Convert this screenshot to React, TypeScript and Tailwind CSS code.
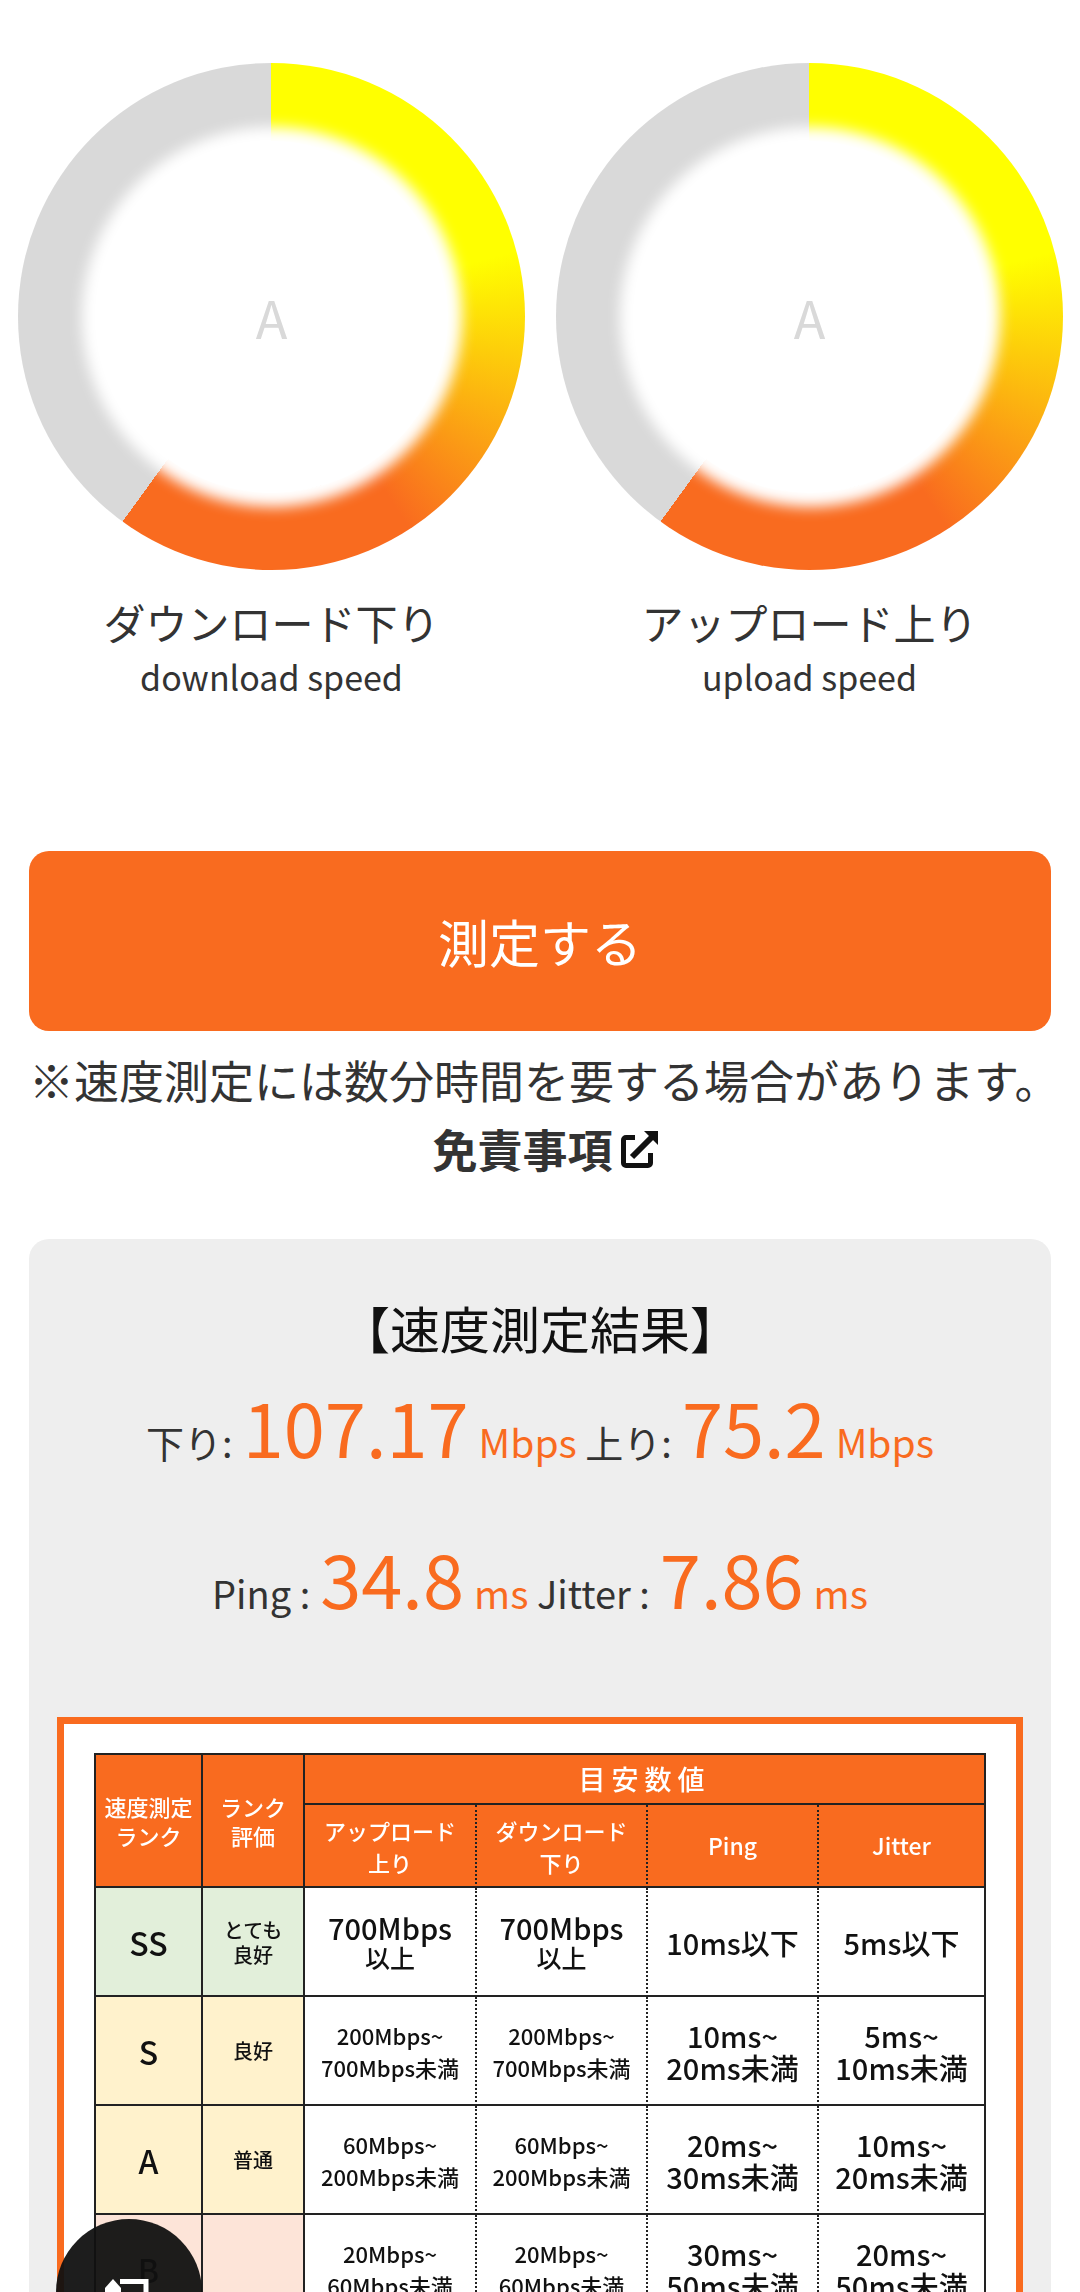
import React from 'react';

const font = "font-['Noto_Sans_CJK_JP','Noto_Sans',sans-serif]";

const Gauge = ({ title, sub }: { title: string; sub: string }) => (
  <div className="flex flex-col items-center">
    <div className="w-[507px] h-[507px] rounded-full flex items-center justify-center bg-[conic-gradient(#ffff00_0deg_75deg,#f96b1f_147deg_216deg,#d9d9d9_216deg_360deg)]">
      <div className="w-[352px] h-[352px] rounded-full bg-white shadow-[0_0_14px_14px_#ffffff] flex items-center justify-center text-[52px] text-[#d9d9d9]">
        A
      </div>
    </div>
    <div className="mt-[22px] text-[42px] leading-[60px] text-[#333]">{title}</div>
    <div className="text-[34px] leading-[50px] text-[#333]">{sub}</div>
  </div>
);

const Stat = ({ value, unit }: { value: string; unit: string }) => (
  <>
    <span className="text-[74px] text-[#f96b1f] mx-[10px]">{value}</span>
    <span className="text-[39px] text-[#f96b1f]">{unit}</span>
  </>
);

const rows = [
  {
    rank: 'SS',
    label: ['とても', '良好'],
    bg: 'bg-[#e2efda]',
    speed: ['700Mbps', '以上'],
    big: true,
    ping: ['10ms以下'],
    jitter: ['5ms以下'],
  },
  {
    rank: 'S',
    label: ['良好'],
    bg: 'bg-[#fff2cc]',
    speed: ['200Mbps~', '700Mbps未満'],
    big: false,
    ping: ['10ms~', '20ms未満'],
    jitter: ['5ms~', '10ms未満'],
  },
  {
    rank: 'A',
    label: ['普通'],
    bg: 'bg-[#fff2cc]',
    speed: ['60Mbps~', '200Mbps未満'],
    big: false,
    ping: ['20ms~', '30ms未満'],
    jitter: ['10ms~', '20ms未満'],
  },
  {
    rank: 'B',
    label: [],
    bg: 'bg-[#fde4d8]',
    speed: ['20Mbps~', '60Mbps未満'],
    big: false,
    ping: ['30ms~', '50ms未満'],
    jitter: ['20ms~', '50ms未満'],
  },
];

const Lines = ({ lines, className }: { lines: string[]; className: string }) => (
  <div className={`text-center ${className}`}>
    {lines.map((line) => (
      <div key={line}>{line}</div>
    ))}
  </div>
);

const cell = 'flex items-center justify-center border-[#222]';
const head = 'bg-[#f96b1f] text-white font-medium';
const dotted = 'flex items-center justify-center bg-white border-b-2 border-b-[#222] border-r-2 border-r-[#222] [border-right-style:dotted]';

const RankTable = () => (
  <div className="grid grid-cols-[107px_102px_172px_171px_171px_165px] grid-rows-[50px_83px_109px_109px_109px_109px] border-t-2 border-l-2 border-r-2 border-[#222] text-[#111] blur-[0.6px]">
    <div className={`${cell} ${head} row-span-2 border-r-2 border-b-2 text-[22px] leading-[29px]`}>
      <Lines lines={['速度測定', 'ランク']} className="" />
    </div>
    <div className={`${cell} ${head} row-span-2 border-r-2 border-b-2 text-[22px] leading-[29px]`}>
      <Lines lines={['ランク', '評価']} className="" />
    </div>
    <div className={`${cell} ${head} col-span-4 border-b-2 text-[27px] tracking-[6px]`}>目安数値</div>
    <div className={`${cell} ${head} border-b-2 border-r-2 [border-right-style:dotted] text-[22px] leading-[32px]`}>
      <Lines lines={['アップロード', '上り']} className="" />
    </div>
    <div className={`${cell} ${head} border-b-2 border-r-2 [border-right-style:dotted] text-[22px] leading-[32px]`}>
      <Lines lines={['ダウンロード', '下り']} className="" />
    </div>
    <div className={`${cell} ${head} border-b-2 border-r-2 [border-right-style:dotted] text-[23px]`}>Ping</div>
    <div className={`${cell} ${head} border-b-2 text-[23px]`}>Jitter</div>
    {rows.map((row) => (
      <React.Fragment key={row.rank}>
        <div className={`${cell} ${row.bg} border-r-2 border-b-2 text-[32px] font-medium`}>{row.rank}</div>
        <div className={`${cell} ${row.bg} border-r-2 border-b-2 text-[20px] leading-[25px] font-medium`}>
          <Lines lines={row.label} className="" />
        </div>
        {[0, 1].map((n) => (
          <div key={n} className={`${dotted} font-medium`}>
            {row.big ? (
              <div className="text-center">
                <div className="text-[29px] leading-[31px]">{row.speed[0]}</div>
                <div className="text-[25px] leading-[29px]">{row.speed[1]}</div>
              </div>
            ) : (
              <Lines lines={row.speed} className="text-[22px] leading-[32px]" />
            )}
          </div>
        ))}
        <div className={`${dotted} font-medium`}>
          <Lines lines={row.ping} className="text-[29px] leading-[32px]" />
        </div>
        <div className="flex items-center justify-center border-b-2 border-b-[#222] bg-white font-medium">
          <Lines lines={row.jitter} className="text-[29px] leading-[32px]" />
        </div>
      </React.Fragment>
    ))}
  </div>
);

export default function App() {
  return (
    <div className={`h-[2292px] overflow-hidden bg-white ${font}`}>
      <div className="flex justify-between pt-[63px] pl-[18px] pr-[17px]">
        <Gauge title="ダウンロード下り" sub="download speed" />
        <Gauge title="アップロード上り" sub="upload speed" />
      </div>

      <div className="px-[29px] mt-[149px]">
        <button className="w-full h-[180px] rounded-[20px] bg-[#f96b1f] text-white text-[51px]">測定する</button>
        <p className="mt-[18px] text-[45px] leading-[62px] text-[#333] whitespace-nowrap">
          ※速度測定には数分時間を要する場合があります。
        </p>
        <div className="mt-[7px] pl-[10px] flex items-center justify-center gap-[8px] text-[45px] leading-[62px] font-bold text-[#333]">
          免責事項
          <svg width="37" height="37" viewBox="0 0 37 37" fill="none" stroke="#111" strokeWidth="5">
            <path d="M14 6.5H5a2.5 2.5 0 0 0-2.5 2.5v23a2.5 2.5 0 0 0 2.5 2.5h22a2.5 2.5 0 0 0 2.5-2.5V22" />
            <path d="M11 26 31 6" strokeWidth="6" />
            <path d="M23 0h14v14z" fill="#111" stroke="none" />
          </svg>
        </div>

        <div className="mt-[59px] rounded-t-[20px] bg-[#eeeeee] px-[28px] pt-[56px] h-[1100px]">
          <div className="text-center text-[50px] leading-[64px] text-[#111]">【速度測定結果】</div>
          <div className="mt-[9px] text-center text-[38px] leading-[116px] text-[#333] whitespace-nowrap">
            下り:
            <Stat value="107.17" unit="Mbps" /> 上り:
            <Stat value="75.2" unit="Mbps" />
          </div>
          <div className="mt-[19px] text-center text-[38px] leading-[116px] text-[#333] whitespace-nowrap">
            Ping :
            <Stat value="34.8" unit="ms" /> Jitter :
            <Stat value="7.86" unit="ms" />
          </div>
          <div className="mt-[66px] border-[7px] border-[#f96b1f] bg-white pt-[29px] px-[30px]">
            <RankTable />
          </div>
        </div>
      </div>

      <div className="fixed left-[56px] top-[2219px] w-[146px] h-[146px] rounded-full bg-[#111111]/95 flex justify-center pt-[60px]">
        <svg width="60" height="60" viewBox="0 0 60 60" fill="none" stroke="#fff" strokeWidth="5">
          <path d="M14 30V8" />
          <path d="M14 0 6 9v4h16V9z" fill="#fff" stroke="none" />
          <path d="M21 2.5h26V34H14" />
        </svg>
      </div>
    </div>
  );
}
